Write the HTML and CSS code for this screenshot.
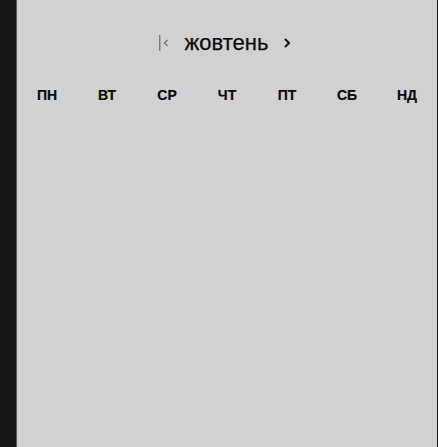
FILE: index.html
```html
<!DOCTYPE html>
<html lang="uk">
<head>
<meta charset="utf-8">
<link rel="stylesheet" href="styles.css">
</head>
<body>
<div class="frame">
  <div class="side"></div>
  <div class="panel">
    <div class="header">
      <span class="nav nav-first">
        <svg width="14" height="18" viewBox="0 0 14 18"><rect x="1" y="1" width="1.4" height="16" fill="#7a7a7a"/><path d="M9.5 6 L6.5 9 L9.5 12" fill="none" stroke="#7a7a7a" stroke-width="1.5"/></svg>
      </span>
      <span class="title">жовтень</span>
      <span class="nav nav-next">
        <svg width="10" height="12" viewBox="0 0 10 12"><path d="M3 2 L7 6 L3 10" fill="none" stroke="#111" stroke-width="2"/></svg>
      </span>
    </div>
    <div class="weekdays">
      <div class="wd">ПН</div>
      <div class="wd">ВТ</div>
      <div class="wd">СР</div>
      <div class="wd">ЧТ</div>
      <div class="wd">ПТ</div>
      <div class="wd">СБ</div>
      <div class="wd">НД</div>
    </div>
  </div>
</div>
</body>
</html>
```
FILE: styles.css
```css
html, body {
  margin: 0;
  padding: 0;
  background: #141414;
}
body {
  font-family: "Liberation Sans", Arial, sans-serif;
  width: 438px;
  height: 447px;
  overflow: hidden;
}
.frame {
  display: flex;
  height: 447px;
}
.side {
  width: 16px;
  background: #141414;
  border-right: 1px solid #5a5a5a;
}
.panel {
  width: 420px;
  background: #d1d1d1;
  display: flex;
  flex-direction: column;
}
.header {
  display: flex;
  align-items: center;
  justify-content: center;
  height: 26px;
  margin-top: 30px;
  padding-right: 4px;
}
.nav {
  display: flex;
  align-items: center;
}
.nav-first {
  margin-right: 13px;
}
.nav-next {
  margin-left: 14px;
}
.title {
  font-size: 22px;
  color: #0a0a0a;
  line-height: 26px;
  -webkit-text-stroke: 0.25px #0a0a0a;
}
.weekdays {
  display: grid;
  grid-template-columns: repeat(7, 1fr);
  margin-top: 30px;
}
.wd {
  text-align: center;
  font-weight: bold;
  font-size: 14px;
  color: #0a0a0a;
  line-height: 18px;
  -webkit-text-stroke: 0.2px #0a0a0a;
}
```
